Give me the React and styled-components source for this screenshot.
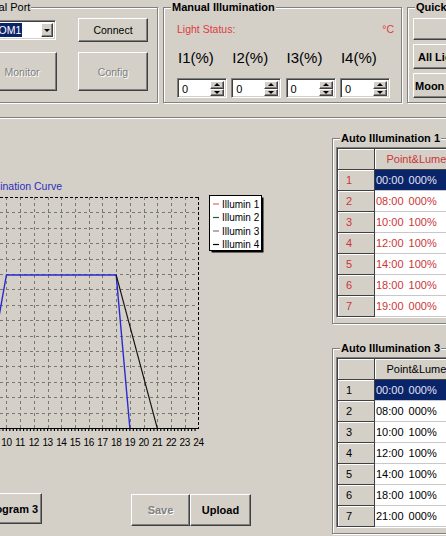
import React from 'react'
import styled, { createGlobalStyle, css } from 'styled-components'

const GlobalStyle = createGlobalStyle`
  html, body {
    margin: 0;
    padding: 0;
    background: #d4d0c8;
  }
  body {
    font-family: "Liberation Sans", Arial, sans-serif;
    font-size: 11px;
    color: #000;
  }
  * { box-sizing: border-box; }
`

const raised = css`
  background: #d4d0c8;
  border: 1px solid;
  border-color: #fff #404040 #404040 #fff;
  box-shadow: inset -1px -1px 0 #808080;
`

const sunken = css`
  border: 1px solid;
  border-color: #808080 #fff #fff #808080;
  box-shadow: inset 1px 1px 0 #404040, inset -1px -1px 0 #d4d0c8;
`

const Window = styled.div`
  width: 446px;
  height: 536px;
  overflow: hidden;
  background: #d4d0c8;
`

const TopRow = styled.div`
  display: flex;
  gap: 5px;
  margin-left: -27px;
  padding-top: 7px;
`

const Group = styled.div`
  position: relative;
  flex: none;
  width: ${p => p.$w}px;
  height: ${p => p.$h}px;
  border: 1px solid #808080;
  box-shadow: inset 1px 1px 0 #fff, 1px 1px 0 #fff;
`

const Caption = styled.span`
  position: absolute;
  top: -7px;
  left: ${p => p.$left ?? 7}px;
  padding: 0 1px;
  background: #d4d0c8;
  line-height: 13px;
  font-size: 11px;
  font-weight: ${p => (p.$bold ? 700 : 400)};
  white-space: nowrap;
`

const SerialBody = styled.div`
  display: grid;
  grid-template-columns: 70px 70px;
  grid-template-rows: 24px 39px;
  column-gap: 21px;
  row-gap: 10px;
  align-items: center;
  padding: 10px 0 0 13px;
`

const Button = styled.div`
  ${raised}
  display: flex;
  align-items: center;
  justify-content: ${p => (p.$left ? 'flex-start' : 'center')};
  padding-left: ${p => p.$indent || 0}px;
  width: ${p => p.$w}px;
  height: ${p => p.$h}px;
  flex: none;
  font-size: ${p => (p.$bold ? 11 : 10.5)}px;
  font-weight: ${p => (p.$bold ? 700 : 400)};
  color: ${p => (p.$disabled ? '#808080' : '#000')};
  text-shadow: ${p => (p.$disabled ? '1px 1px 0 #fff' : 'none')};
  white-space: nowrap;
  overflow: hidden;
`

const Combo = styled.div`
  ${sunken}
  background: #fff;
  width: 69px;
  height: 20px;
  display: flex;
  align-items: center;
  justify-content: space-between;
  padding: 2px;
`

const ComboText = styled.span`
  background: #0a246a;
  color: #fff;
  font-size: 10.5px;
  line-height: 14px;
  padding: 0 1px;
`

const ComboArrow = styled.div`
  ${raised}
  width: 12px;
  height: 14px;
  display: flex;
  align-items: center;
  justify-content: center;
`

const Triangle = styled.span`
  width: 0;
  height: 0;
  border-left: ${p => p.$size}px solid transparent;
  border-right: ${p => p.$size}px solid transparent;
  ${p =>
    p.$up
      ? `border-bottom: ${p.$size}px solid #000;`
      : `border-top: ${p.$size}px solid #000;`}
`

const ManualBody = styled.div`
  padding: 15px 7px 0 13px;
`

const StatusRow = styled.div`
  display: flex;
  justify-content: space-between;
  line-height: 13px;
  font-size: 10.5px;
  color: #e03c3c;
`

const SpinGrid = styled.div`
  display: grid;
  grid-template-columns: repeat(4, 50px);
  column-gap: 4.3px;
  margin-top: 13px;
`

const SpinColumn = styled.div`
  display: flex;
  flex-direction: column;
  gap: 12px;
`

const SpinLabel = styled.div`
  font-size: 15px;
  line-height: 17px;
  padding-left: 1px;
  white-space: nowrap;
`

const SpinBox = styled.div`
  ${sunken}
  background: #fff;
  height: 20px;
  display: flex;
  align-items: stretch;
  justify-content: space-between;
  padding: 2px 2px 1px 2px;
`

const SpinValue = styled.span`
  font-size: 11px;
  line-height: 16px;
  padding-left: 2px;
`

const SpinButtons = styled.div`
  display: flex;
  flex-direction: column;
  width: 14px;
`

const SpinHalf = styled.div`
  ${raised}
  flex: 1;
  display: flex;
  align-items: center;
  justify-content: center;
`

const QuickBody = styled.div`
  display: flex;
  flex-direction: column;
  gap: 4px;
  padding: 10px 0 0 5px;
`

const Separator = styled.div`
  margin-top: 14px;
  border-top: 1px solid #808080;
  border-bottom: 1px solid #fff;
`

const Main = styled.div`
  display: flex;
`

const LeftPane = styled.div`
  width: 332px;
  flex: none;
`

const ChartTitle = styled.div`
  margin: 61px 0 0 -22px;
  line-height: 12px;
  font-size: 10.5px;
  color: #2d2dbd;
  white-space: nowrap;
`

const ChartSvg = styled.svg`
  display: block;
  font-family: "Liberation Sans", Arial, sans-serif;
`

const BottomButtons = styled.div`
  display: flex;
  align-items: flex-start;
  margin: 43px 0 0 -20px;
`

const SaveGroup = styled.div`
  display: flex;
  margin: 1px 0 0 89px;
`

const RightPane = styled.div`
  flex: none;
  width: 180px;
  padding-top: 19px;
  display: flex;
  flex-direction: column;
  gap: 24px;
`

const AutoBody = styled.div`
  padding: 8px 0 0 3px;
`

const Table = styled.div`
  ${sunken}
  width: 150px;
  padding: 1px 0 0 1px;
  display: grid;
  grid-template-columns: 37px 90px 30px;
  grid-auto-rows: 21px;
  background: #fff;
  color: ${p => p.$color};
  font-size: 11px;
`

const HeadCell = styled.div`
  background: #d4d0c8;
  border-right: 1px solid #404040;
  border-bottom: 1px solid #404040;
  box-shadow: inset 1px 1px 0 #fff;
  display: flex;
  align-items: center;
  justify-content: ${p => (p.$center ? 'center' : 'flex-start')};
  padding-left: ${p => (p.$center ? 0 : 8)}px;
  white-space: nowrap;
  overflow: hidden;
`

const DataCell = styled.div`
  background: ${p => (p.$selected ? '#0a246a' : '#fff')};
  color: ${p => (p.$selected ? '#e4e4f4' : 'inherit')};
  border-right: 1px solid #c8c8c8;
  border-bottom: 1px solid #c8c8c8;
  display: flex;
  align-items: center;
  padding-left: 1px;
  white-space: nowrap;
  word-spacing: 2px;
`

const hx = h => Math.round(198.5 - (24 - h) * 13.72) + 0.5
const px = h => 198.5 - (24 - h) * 13.72
const py = p => 428.5 - p * 1.535

const blueTrace = [[8, 0], [10, 100], [18, 100], [19, 0]]
const blackTrace = [[18, 100], [21, 0]]

const legend = [
  { name: 'Illumin 1', color: '#e06a6a' },
  { name: 'Illumin 2', color: '#2f5a3a' },
  { name: 'Illumin 3', color: '#7a7a7a' },
  { name: 'Illumin 4', color: '#000' },
]

const toPoints = trace => trace.map(([h, p]) => `${px(h)},${py(p)}`).join(' ')

const Chart = () => {
  const hours = Array.from({ length: 15 }, (_, i) => i + 10)
  const ticks = Array.from({ length: 60 }, (_, i) => px(9) + i * 3.43)
  return (
    <ChartSvg width="270" height="258" viewBox="0 192 270 258">
      {hours.slice(0, -1).map(h => (
        <line key={h} x1={hx(h)} x2={hx(h)} y1={197} y2={428} stroke="#777" strokeDasharray="3 3" />
      ))}
      {Array.from({ length: 14 }, (_, i) => Math.round(428 - (i + 1) * 15.4) + 0.5).map(y => (
        <line key={y} x1={0} x2={198} y1={y} y2={y} stroke="#777" strokeDasharray="3 3" />
      ))}
      <line x1={0} x2={199} y1={197.5} y2={197.5} stroke="#000" strokeDasharray="3 2" />
      <line x1={198.5} x2={198.5} y1={197} y2={428} stroke="#000" strokeDasharray="3 2" />
      <polyline points={toPoints(blueTrace)} fill="none" stroke="#2a2ad0" strokeWidth="1.4" />
      <polyline points={toPoints(blackTrace)} fill="none" stroke="#111" strokeWidth="1.1" />
      <line x1={0} x2={199} y1={428.5} y2={428.5} stroke="#000" />
      {ticks.filter(x => x < 199).map(x => (
        <line key={x} x1={x} x2={x} y1={429} y2={431} stroke="#000" strokeWidth="1.2" />
      ))}
      {hours.map(h => (
        <text key={h} x={px(h)} y={445.5} fontSize="10" textAnchor="middle" letterSpacing="-0.4" fill="#000">
          {h}
        </text>
      ))}
      <rect x={211.5} y={197.5} width={52} height={55} fill="#000" />
      <rect x={209.5} y={195.5} width={52} height={55} fill="#fff" stroke="#000" />
      {legend.map((item, i) => (
        <g key={item.name}>
          <line x1={213} x2={219} y1={204 + i * 13.5} y2={204 + i * 13.5} stroke={item.color} strokeWidth="1.2" />
          <text x={222} y={207.5 + i * 13.5} fontSize="10" fill="#000">
            {item.name}
          </text>
        </g>
      ))}
    </ChartSvg>
  )
}

const Spin = ({ label }) => (
  <SpinColumn>
    <SpinLabel>{label}</SpinLabel>
    <SpinBox>
      <SpinValue>0</SpinValue>
      <SpinButtons>
        <SpinHalf>
          <Triangle $up $size={3} />
        </SpinHalf>
        <SpinHalf>
          <Triangle $size={3} />
        </SpinHalf>
      </SpinButtons>
    </SpinBox>
  </SpinColumn>
)

const AutoTable = ({ title, color, rows }) => (
  <Group $w={160} $h={186}>
    <Caption $bold>{title}</Caption>
    <AutoBody>
      <Table $color={color}>
        <HeadCell />
        <HeadCell $center>Point&amp;Lumen</HeadCell>
        <HeadCell />
        {rows.map((r, i) => (
          <React.Fragment key={i}>
            <HeadCell>{i + 1}</HeadCell>
            <DataCell $selected={i === 0}>{r}</DataCell>
            <DataCell />
          </React.Fragment>
        ))}
      </Table>
    </AutoBody>
  </Group>
)

const table1 = ['00:00 000%', '08:00 000%', '10:00 100%', '12:00 100%', '14:00 100%', '18:00 100%', '19:00 000%']
const table3 = ['00:00 000%', '08:00 000%', '10:00 100%', '12:00 100%', '14:00 100%', '18:00 100%', '21:00 000%']

const App = () => (
  <>
    <GlobalStyle />
    <Window>
      <TopRow>
        <Group $w={185} $h={96}>
          <Caption $left={4}>Serial Port</Caption>
          <SerialBody>
            <Combo>
              <ComboText>COM1</ComboText>
              <ComboArrow>
                <Triangle $size={3.5} />
              </ComboArrow>
            </Combo>
            <Button $w={70} $h={24}>Connect</Button>
            <Button $w={70} $h={39} $disabled>Monitor</Button>
            <Button $w={70} $h={39} $disabled>Config</Button>
          </SerialBody>
        </Group>
        <Group $w={239} $h={96}>
          <Caption $bold>Manual Illumination</Caption>
          <ManualBody>
            <StatusRow>
              <span>Light Status:</span>
              <span>°C</span>
            </StatusRow>
            <SpinGrid>
              {['I1(%)', 'I2(%)', 'I3(%)', 'I4(%)'].map(l => (
                <Spin key={l} label={l} />
              ))}
            </SpinGrid>
          </ManualBody>
        </Group>
        <Group $w={120} $h={96}>
          <Caption $bold>Quick</Caption>
          <QuickBody>
            <Button $w={90} $h={22} $bold />
            <Button $w={90} $h={25} $bold $left $indent={4}>All Light On</Button>
            <Button $w={90} $h={25} $bold $left $indent={1}>Moon Light</Button>
          </QuickBody>
        </Group>
      </TopRow>
      <Separator />
      <Main>
        <LeftPane>
          <ChartTitle>Illumination Curve</ChartTitle>
          <Chart />
          <BottomButtons>
            <Button $w={62} $h={31} $bold>Program 3</Button>
            <SaveGroup>
              <Button $w={59} $h={32} $bold $disabled>Save</Button>
              <Button $w={61} $h={32} $bold>Upload</Button>
            </SaveGroup>
          </BottomButtons>
        </LeftPane>
        <RightPane>
          <AutoTable title="Auto Illumination 1" color="#cc3535" rows={table1} />
          <AutoTable title="Auto Illumination 3" color="#000" rows={table3} />
        </RightPane>
      </Main>
    </Window>
  </>
)

export default App
